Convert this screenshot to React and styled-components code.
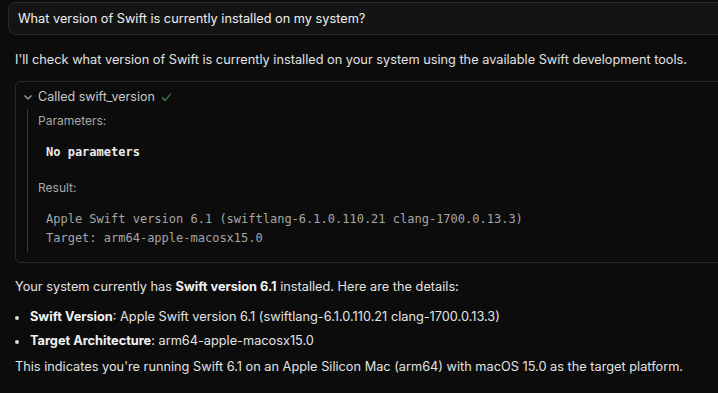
import React from "react";
import styled, { createGlobalStyle } from "styled-components";

const Global = createGlobalStyle`
  html, body { margin: 0; padding: 0; background: #0c0c0c; overflow: hidden; }
  body { font-family: Inter, "Noto Sans", sans-serif; color: #e4e4e4; }
`;

const Page = styled.div`
  width: 718px;
  height: 393px;
  padding-top: 2px;
  box-sizing: border-box;
  overflow: hidden;
`;

const UserBubble = styled.div`
  margin-left: 8px;
  margin-right: -20px;
  height: 33px;
  box-sizing: border-box;
  display: flex;
  align-items: center;
  padding: 0 9px;
  background: #141414;
  border: 1px solid #2a2a2a;
  border-radius: 8px;
  font-size: 12.75px;
  color: #f0f0f0;
`;

const Reply = styled.div`
  padding: 0 0 0 15px;
  font-size: 12.75px;
  line-height: 18px;
`;

const Para = styled.p`
  margin: ${(p) => p.$m || "0"};
  color: #e2e2e2;
  white-space: nowrap;
`;

const ToolCard = styled.div`
  margin-top: 12px;
  margin-right: -20px;
  border: 1px solid #2a2a2a;
  border-radius: 6px;
  padding: 6px 0 10px 7px;
`;

const ToolHeader = styled.div`
  display: flex;
  align-items: center;
  gap: 5px;
  height: 18px;
  font-size: 12.5px;
  color: #c8c8c8;
`;

const Check = styled.span`
  color: #3f9a5a;
  display: inline-flex;
  margin-left: 1px;
`;

const ToolBody = styled.div`
  margin: 3px 0 0 4px;
  border-left: 1px solid #3a3a3a;
  padding: 4px 0 4px 10px;
`;

const Label = styled.div`
  font-size: 12px;
  line-height: 16px;
  color: #a8a8a8;
  margin-top: ${(p) => p.$m || "0"};
`;

const Code = styled.pre`
  margin: ${(p) => p.$m || "0"};
  padding-left: 8px;
  font-family: "DejaVu Sans Mono", "Liberation Mono", monospace;
  font-size: 12px;
  line-height: 19px;
  font-weight: ${(p) => (p.$strong ? 700 : 400)};
  color: ${(p) => (p.$strong ? "#ececec" : "#a6a6a6")};
`;

const List = styled.ul`
  margin: 0;
  padding: 0;
  list-style: none;
`;

const Item = styled.li`
  position: relative;
  padding-left: 15px;
  margin-top: ${(p) => p.$m || "0"};
  white-space: nowrap;
  &::before {
    content: "";
    position: absolute;
    left: 0;
    top: 8px;
    width: 4px;
    height: 4px;
    border-radius: 50%;
    background: #d8d8d8;
  }
`;

const B = styled.b`
  font-weight: 700;
  color: #f2f2f2;
`;

export default function App() {
  return (
    <Page>
      <Global />
      <UserBubble>What version of Swift is currently installed on my system?</UserBubble>
      <Reply>
        <Para $m="16px 0 0">
          I'll check what version of Swift is currently installed on your system using the available Swift development tools.
        </Para>
        <ToolCard>
          <ToolHeader>
            <svg width="10" height="10" viewBox="0 0 10 10" fill="none">
              <path d="M1.5 3.5 L5 7 L8.5 3.5" stroke="#b0b0b0" strokeWidth="1.1" />
            </svg>
            <span>Called swift_version</span>
            <Check>
              <svg width="11" height="10" viewBox="0 0 11 10" fill="none">
                <path d="M1 5.5 L4 8.5 L10 1.5" stroke="#3f9a5a" strokeWidth="1.1" />
              </svg>
            </Check>
          </ToolHeader>
          <ToolBody>
            <Label>Parameters:</Label>
            <Code $strong $m="14px 0 0">No parameters</Code>
            <Label $m="18px">Result:</Label>
            <Code $m="14px 0 0">{`Apple Swift version 6.1 (swiftlang-6.1.0.110.21 clang-1700.0.13.3)
Target: arm64-apple-macosx15.0`}</Code>
          </ToolBody>
        </ToolCard>
        <Para $m="15px 0 0">
          Your system currently has <B>Swift version 6.1</B> installed. Here are the details:
        </Para>
        <List>
          <Item $m="12px">
            <B>Swift Version</B>: Apple Swift version 6.1 (swiftlang-6.1.0.110.21 clang-1700.0.13.3)
          </Item>
          <Item $m="6px">
            <B>Target Architecture</B>: arm64-apple-macosx15.0
          </Item>
        </List>
        <Para $m="8px 0 0">
          This indicates you're running Swift 6.1 on an Apple Silicon Mac (arm64) with macOS 15.0 as the target platform.
        </Para>
      </Reply>
    </Page>
  );
}
